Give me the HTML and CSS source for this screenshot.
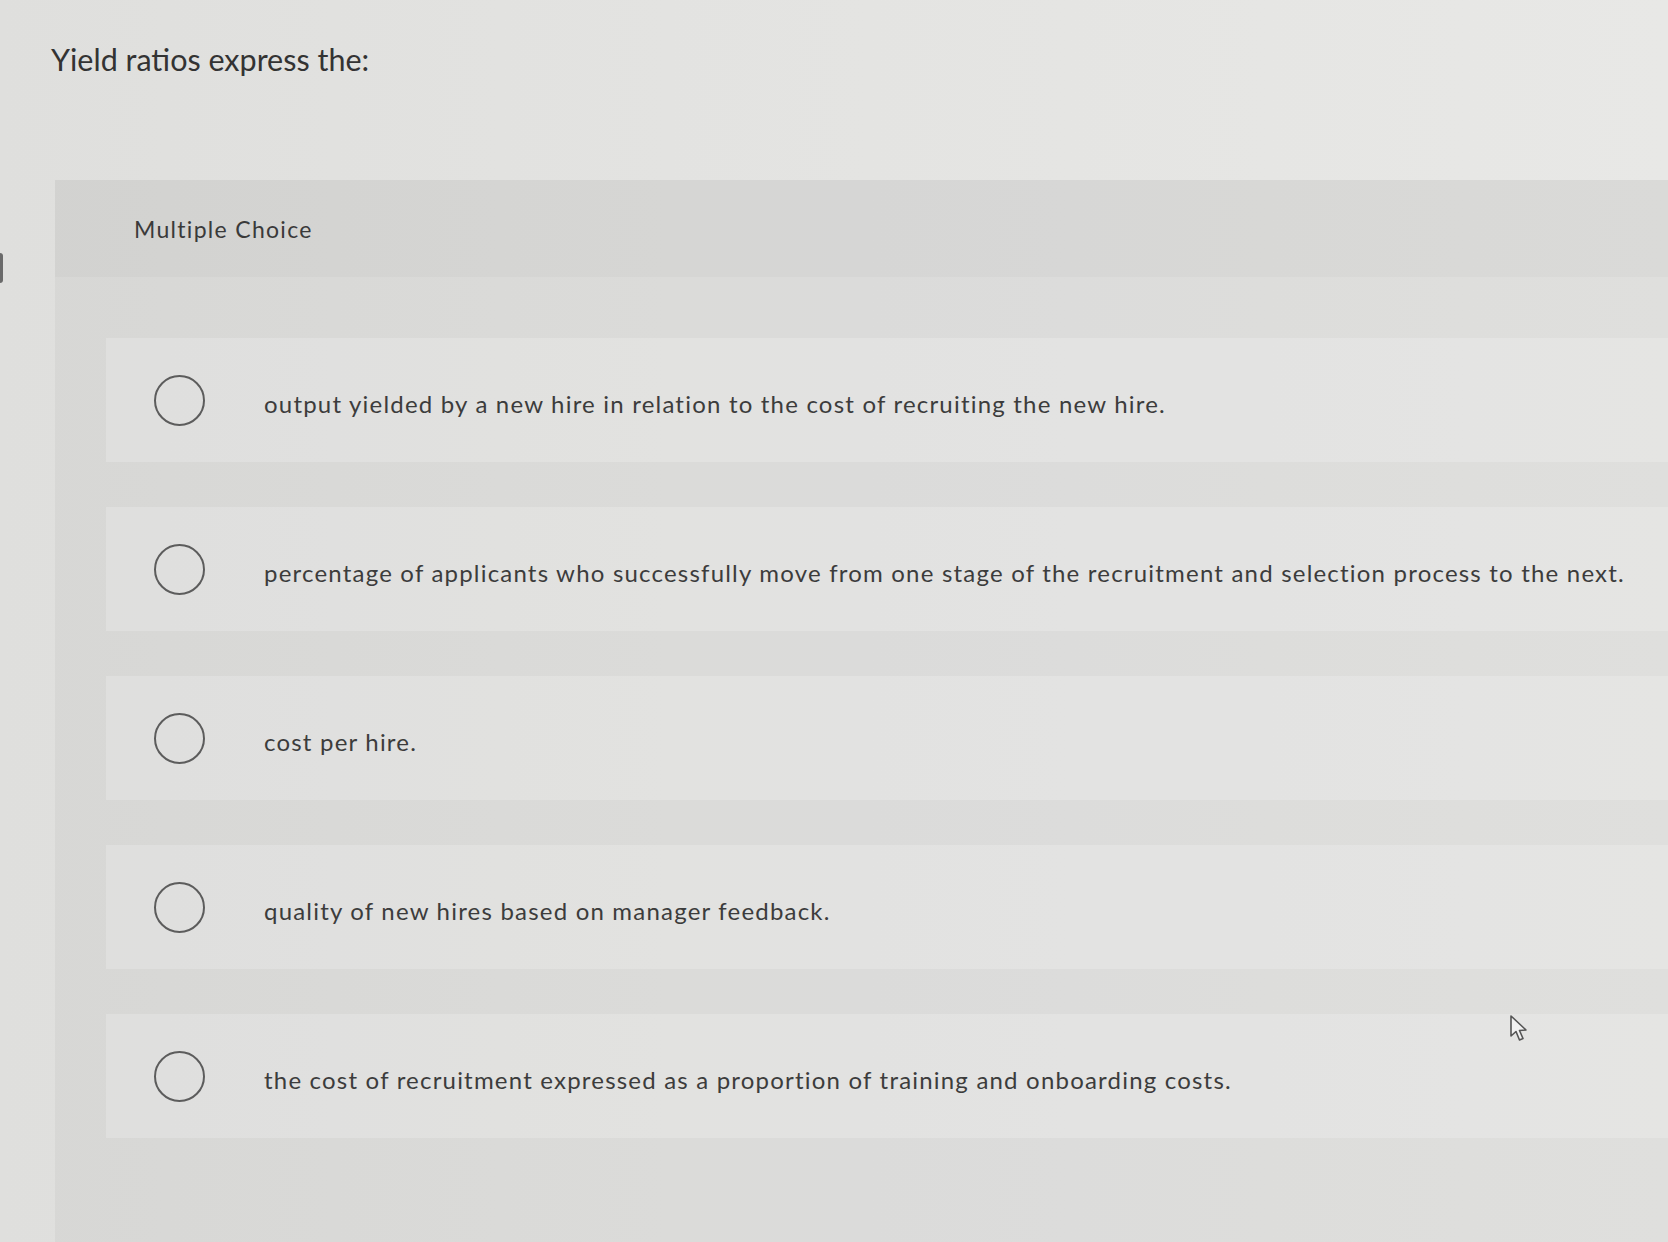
FILE: index.html
```html
<!DOCTYPE html>
<html lang="en">
<head>
<meta charset="utf-8">
<title>Yield ratios express the:</title>
<link rel="stylesheet" href="styles.css">
</head>
<body>
<div class="page">
  <h1 class="title">Yield ratios express the:</h1>
  <section class="panel">
    <div class="panel-head">Multiple Choice</div>
    <div class="options">
      <label class="option"><span class="radio"></span><span class="option-text">output yielded by a new hire in relation to the cost of recruiting the new hire.</span></label>
      <label class="option"><span class="radio"></span><span class="option-text">percentage of applicants who successfully move from one stage of the recruitment and selection process to the next.</span></label>
      <label class="option"><span class="radio"></span><span class="option-text">cost per hire.</span></label>
      <label class="option"><span class="radio"></span><span class="option-text">quality of new hires based on manager feedback.</span></label>
      <label class="option"><span class="radio"></span><span class="option-text">the cost of recruitment expressed as a proportion of training and onboarding costs.</span></label>
    </div>
  </section>
  <span class="edge-tab"></span>
  <svg class="cursor" width="24" height="30" viewBox="0 0 24 30" aria-hidden="true">
    <path d="M2 2 L2 22 L7 17.5 L10.5 26 L14 24.5 L10.5 16.5 L17 16 Z" fill="#f2f2f2" stroke="#555" stroke-width="1.6" stroke-linejoin="round"/>
  </svg>
</div>
</body>
</html>
```

FILE: styles.css
```css
html, body {
  margin: 0;
  padding: 0;
}

body {
  width: 1668px;
  height: 1242px;
  overflow: hidden;
  background: linear-gradient(90deg, #dfdfdd 0%, #e3e3e1 40%, #e8e8e6 100%);
  font-family: Lato, "Open Sans", Arial, sans-serif;
  color: #3a3a3a;
}

.page {
  position: relative;
  padding-top: 41px;
  height: 1201px;
  display: flex;
  flex-direction: column;
}

.title {
  margin: 0 0 0 51px;
  font-size: 30.5px;
  line-height: 37px;
  font-weight: 400;
  color: #333;
}

.panel {
  margin: 102px 0 0 55px;
  flex: 1;
  display: flex;
  flex-direction: column;
  background: rgba(0, 0, 0, 0.035);
}

.panel-head {
  height: 97px;
  display: flex;
  align-items: center;
  padding-left: 79px;
  font-size: 23px;
  letter-spacing: 1.3px;
  color: #3a3a3a;
  background: rgba(0, 0, 0, 0.02);
}

.options {
  display: flex;
  flex-direction: column;
  gap: 45px;
  padding: 61px 0 0 51px;
}

.option {
  height: 124px;
  display: flex;
  align-items: center;
  background: rgba(255, 255, 255, 0.2);
}

.radio {
  flex: none;
  width: 47px;
  height: 47px;
  margin-left: 48px;
  border: 2px solid #5c5c5c;
  border-radius: 50%;
}

.option-text {
  margin-left: 59px;
  padding-top: 6px;
  font-size: 24px;
  letter-spacing: 1.2px;
  color: #3c3c3c;
}

.edge-tab {
  position: absolute;
  left: 0;
  top: 253px;
  width: 3px;
  height: 30px;
  background: #6a6a6a;
  border-radius: 0 3px 3px 0;
}

.cursor {
  position: absolute;
  left: 1509px;
  top: 1014px;
}
```
